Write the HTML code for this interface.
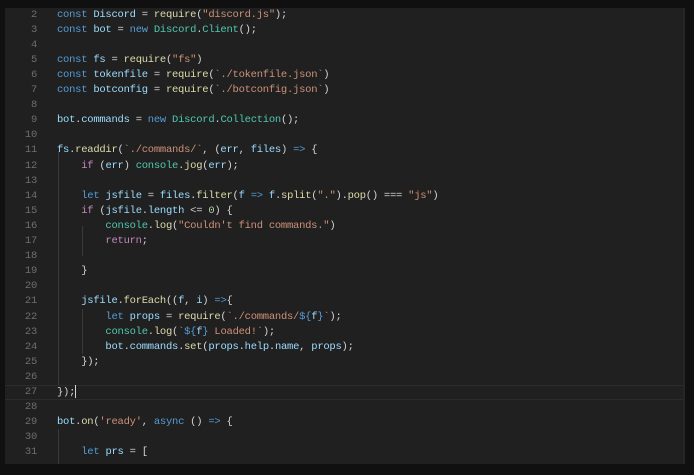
<!DOCTYPE html>
<html><head><meta charset="utf-8"><style>
body{margin:0;width:694px;height:475px;background:#101010;overflow:hidden;position:relative;font-family:"Liberation Mono",monospace;}
#p{position:absolute;left:5px;top:8px;width:680px;height:456px;background:#202020;overflow:hidden;}
#sb{position:absolute;right:0;top:0;width:2px;height:100%;background:#262626}
#ls{position:absolute;left:0;top:1px;width:100%;height:100%}
.l{position:absolute;left:0;width:100%;height:15.1px;line-height:15.1px;font-size:10.5px;letter-spacing:-0.25px;white-space:pre;color:#d4d4d4;}
.n{position:absolute;left:0;width:32px;text-align:right;color:#6e6e6e;}
.c{position:absolute;left:52px;}
.k{color:#569cd6}.v{color:#9cdcfe}.f{color:#dcdcaa}.s{color:#ce9178}.t{color:#4ec9b0}.p{color:#c586c0}.m{color:#b5cea8}
.g{position:absolute;width:1px;background:#3a3a3a}
#cur{position:absolute;left:0;width:678px;top:377px;height:15px;border-top:1px solid #2c2c2c;border-bottom:1px solid #2c2c2c;box-sizing:border-box}
</style></head><body><div id="p">
<div id="sb"></div>
<div id="cur"></div>
<div class="g" style="left:53px;top:143px;height:234px"></div>
<div class="g" style="left:77px;top:218px;height:30px"></div>
<div class="g" style="left:77px;top:301px;height:45px"></div>
<div class="g" style="left:53px;top:421px;height:40px"></div>
<div id="ls">
<div class="l" style="top:-1.5px"><span class="n">2</span><span class="c"><span class="k">const</span> <span class="v">Discord</span> = <span class="f">require</span>(<span class="s">"discord.js"</span>);</span></div>
<div class="l" style="top:13.6px"><span class="n">3</span><span class="c"><span class="k">const</span> <span class="v">bot</span> = <span class="k">new</span> <span class="t">Discord</span>.<span class="t">Client</span>();</span></div>
<div class="l" style="top:28.7px"><span class="n">4</span></div>
<div class="l" style="top:43.8px"><span class="n">5</span><span class="c"><span class="k">const</span> <span class="v">fs</span> = <span class="f">require</span>(<span class="s">"fs"</span>)</span></div>
<div class="l" style="top:58.9px"><span class="n">6</span><span class="c"><span class="k">const</span> <span class="v">tokenfile</span> = <span class="f">require</span>(<span class="s">`./tokenfile.json`</span>)</span></div>
<div class="l" style="top:74px"><span class="n">7</span><span class="c"><span class="k">const</span> <span class="v">botconfig</span> = <span class="f">require</span>(<span class="s">`./botconfig.json`</span>)</span></div>
<div class="l" style="top:89.1px"><span class="n">8</span></div>
<div class="l" style="top:104.2px"><span class="n">9</span><span class="c"><span class="v">bot</span>.<span class="v">commands</span> = <span class="k">new</span> <span class="t">Discord</span>.<span class="t">Collection</span>();</span></div>
<div class="l" style="top:119.3px"><span class="n">10</span></div>
<div class="l" style="top:134.4px"><span class="n">11</span><span class="c"><span class="v">fs</span>.<span class="f">readdir</span>(<span class="s">`./commands/`</span>, (<span class="v">err</span>, <span class="v">files</span>) <span class="k">=&gt;</span> {</span></div>
<div class="l" style="top:149.5px"><span class="n">12</span><span class="c">    <span class="p">if</span> (<span class="v">err</span>) <span class="t">console</span>.<span class="f">jog</span>(<span class="v">err</span>);</span></div>
<div class="l" style="top:164.6px"><span class="n">13</span></div>
<div class="l" style="top:179.7px"><span class="n">14</span><span class="c">    <span class="k">let</span> <span class="v">jsfile</span> = <span class="v">files</span>.<span class="f">filter</span>(<span class="v">f</span> <span class="k">=&gt;</span> <span class="v">f</span>.<span class="f">split</span>(<span class="s">"."</span>).<span class="f">pop</span>() === <span class="s">"js"</span>)</span></div>
<div class="l" style="top:194.8px"><span class="n">15</span><span class="c">    <span class="p">if</span> (<span class="v">jsfile</span>.<span class="v">length</span> &lt;= <span class="m">0</span>) {</span></div>
<div class="l" style="top:209.9px"><span class="n">16</span><span class="c">        <span class="t">console</span>.<span class="f">log</span>(<span class="s">"Couldn't find commands."</span>)</span></div>
<div class="l" style="top:225px"><span class="n">17</span><span class="c">        <span class="p">return</span>;</span></div>
<div class="l" style="top:240.1px"><span class="n">18</span></div>
<div class="l" style="top:255.2px"><span class="n">19</span><span class="c">    }</span></div>
<div class="l" style="top:270.3px"><span class="n">20</span></div>
<div class="l" style="top:285.4px"><span class="n">21</span><span class="c">    <span class="v">jsfile</span>.<span class="f">forEach</span>((<span class="v">f</span>, <span class="v">i</span>) <span class="k">=&gt;</span>{</span></div>
<div class="l" style="top:300.5px"><span class="n">22</span><span class="c">        <span class="k">let</span> <span class="v">props</span> = <span class="f">require</span>(<span class="s">`./commands/</span><span class="k">${</span><span class="v">f</span><span class="k">}</span><span class="s">`</span>);</span></div>
<div class="l" style="top:315.6px"><span class="n">23</span><span class="c">        <span class="t">console</span>.<span class="f">log</span>(<span class="s">`</span><span class="k">${</span><span class="v">f</span><span class="k">}</span><span class="s"> Loaded!`</span>);</span></div>
<div class="l" style="top:330.7px"><span class="n">24</span><span class="c">        <span class="v">bot</span>.<span class="v">commands</span>.<span class="f">set</span>(<span class="v">props</span>.<span class="v">help</span>.<span class="v">name</span>, <span class="v">props</span>);</span></div>
<div class="l" style="top:345.8px"><span class="n">25</span><span class="c">    });</span></div>
<div class="l" style="top:360.9px"><span class="n">26</span></div>
<div class="l" style="top:376px"><span class="n">27</span><span class="c">});<span style="display:inline-block;width:1px;height:13px;background:#d4d4d4;vertical-align:middle"></span></span></div>
<div class="l" style="top:391.1px"><span class="n">28</span></div>
<div class="l" style="top:406.2px"><span class="n">29</span><span class="c"><span class="v">bot</span>.<span class="f">on</span>(<span class="s">'ready'</span>, <span class="k">async</span> () <span class="k">=&gt;</span> {</span></div>
<div class="l" style="top:421.3px"><span class="n">30</span></div>
<div class="l" style="top:436.4px"><span class="n">31</span><span class="c">    <span class="k">let</span> <span class="v">prs</span> = [</span></div>
</div>
</div></body></html>
